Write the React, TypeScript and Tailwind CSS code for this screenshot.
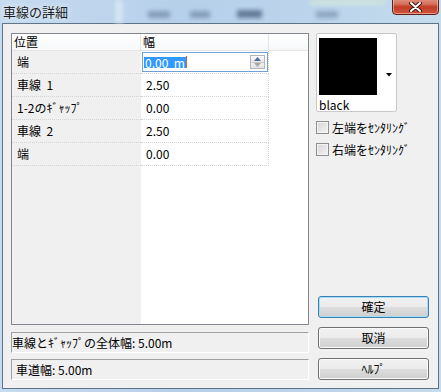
import React from "react";

const rows: [string, string][] = [
  ["端", "0.00 m"],
  ["車線 1", "2.50"],
  ["1-2のｷﾞｬｯﾌﾟ", "0.00"],
  ["車線 2", "2.50"],
  ["端", "0.00"],
];

function Btn({ label, def }: { label: string; def?: boolean }) {
  return (
    <div
      className={
        "w-[111px] h-[22px] rounded-[3px] border flex items-center justify-center text-[12px] text-black bg-[linear-gradient(to_bottom,#f2f2f2_0%,#ebebeb_48%,#dddddd_52%,#cfcfcf_100%)] " +
        (def
          ? "border-[#3c7fb1] shadow-[inset_0_0_0_1px_#9ee0f9]"
          : "border-[#707070] shadow-[inset_0_0_0_1px_#fbfbfb]")
      }
    >
      {label}
    </div>
  );
}

function CheckRow({ label }: { label: string }) {
  return (
    <div className="flex items-center h-[13px]">
      <div className="w-[13px] h-[13px] border border-[#8e8f8f] bg-[linear-gradient(135deg,#d6d6d6,#f4f4f4)] shadow-[inset_0_0_0_1px_#f4f4f4]" />
      <span className="ml-[3px] text-[12px] leading-none text-black">{label}</span>
    </div>
  );
}

export default function App() {
  return (
    <div className="w-[441px] h-[392px] overflow-hidden flex flex-col bg-[linear-gradient(to_right,#c6dbf0_0%,#b7d0ea_40%,#bcd5ec_75%,#c4dcec_100%)] font-['Noto_Sans_CJK_JP','Liberation_Sans',sans-serif]">
      {/* Title bar */}
      <div className="relative h-[23px] shrink-0">
        <span className="absolute left-[115px] top-0 h-[23px] w-[8px] bg-[#d4e4f3] blur-[2px]" />
        <span className="absolute left-[148px] top-[11px] h-[7px] w-[22px] bg-[#7f97b2] blur-[2px] opacity-90" />
        <span className="absolute left-[190px] top-[11px] h-[7px] w-[20px] bg-[#7f97b2] blur-[2px] opacity-90" />
        <span className="absolute left-[237px] top-[10px] h-[8px] w-[25px] bg-[#5c7390] blur-[2px] opacity-90" />
        <span className="absolute left-[316px] top-[11px] h-[7px] w-[22px] bg-[#8aa2bd] blur-[2px] opacity-90" />
        <span className="absolute left-[310px] top-0 h-[5px] w-[75px] bg-[#cfe4dc] blur-[2px]" />
        <div className="relative pl-[3px] pt-[3px] text-[13px] leading-[17px] text-[#1b1b1b] [text-shadow:0_0_6px_#ffffff]">
          車線の詳細
        </div>
        <div className="absolute left-[392px] top-[-5px] w-[47px] h-[20px] rounded-b-[4px] border border-[#5e2419] bg-[linear-gradient(to_bottom,#e7a596_0%,#d6705c_45%,#c03d27_60%,#d2553c_100%)] shadow-[inset_0_0_0_1px_rgba(255,220,210,0.5)] flex items-center justify-center">
          <svg width="13" height="10" viewBox="0 0 13 10" className="mt-[4px]">
            <path d="M2 1 L11 9 M11 1 L2 9" stroke="#3b1a14" strokeWidth="4" strokeLinecap="round" />
            <path d="M2 1 L11 9 M11 1 L2 9" stroke="#ffffff" strokeWidth="2" strokeLinecap="round" />
          </svg>
        </div>
      </div>

      {/* Client area */}
      <div className="mx-[2px] h-[366px] shrink-0 border border-[#5f7387] bg-[#f0f0f0] flex pl-[8px] pt-[9px]">
        {/* Left column */}
        <div className="w-[298px] flex flex-col">
          <div className="h-[292px] border border-[#828790] bg-white flex flex-col">
            {/* header */}
            <div className="h-[17px] flex border-b border-[#e5e5e5] bg-[linear-gradient(to_bottom,#ffffff,#f7f8f9)] text-[12px] leading-none text-black">
              <div className="w-[129px] border-r border-[#e3e5e8] pl-[2px] flex items-center">位置</div>
              <div className="w-[128px] border-r border-[#e3e5e8] pl-[2px] flex items-center">幅</div>
              <div className="flex-1" />
            </div>
            {/* body */}
            <div className="flex-1 flex">
              <div className="w-[129px] bg-[#f0f0f0] flex flex-col">
                {rows.map(([a], i) => (
                  <div
                    key={i}
                    className="h-[23px] border-b border-dotted border-[#d4d4d4] pl-[5px] flex items-center text-[12px] leading-none text-black whitespace-pre"
                  >
                    {a.replace(" ", "  ")}
                  </div>
                ))}
              </div>
              <div className="w-[128px] flex flex-col">
                {rows.map(([, b], i) =>
                  i === 0 ? (
                    <div key={i} className="h-[23px] border-b border-r border-dotted border-[#d4d4d4] pl-[1px] pt-[1px]">
                      <div className="h-[20px] w-[126px] border border-[#6fa1d4] bg-white flex items-center pl-[1px] pr-[2px]">
                        <span className="bg-[#3399ff] text-white text-[12px] leading-[11px] h-[11px] px-[1px] whitespace-pre">
                          0.00  m
                        </span>
                        <span className="w-[1px] h-[12px] bg-[#c4682c]" />
                        <div className="ml-auto w-[15px] h-[14px] border border-[#b5b5b5] flex flex-col">
                          <div className="flex-1 border-b border-[#c8c8c8] bg-[linear-gradient(#fbfbfb,#e8e8e8)] flex items-center justify-center">
                            <svg width="7" height="4" viewBox="0 0 7 4">
                              <path d="M0 4 L3.5 0 L7 4 Z" fill="#4d6f9b" />
                            </svg>
                          </div>
                          <div className="flex-1 bg-[linear-gradient(#f2f2f2,#e2e2e2)] flex items-center justify-center">
                            <svg width="7" height="4" viewBox="0 0 7 4">
                              <path d="M0 0 L7 0 L3.5 4 Z" fill="#a8a8a8" />
                            </svg>
                          </div>
                        </div>
                      </div>
                    </div>
                  ) : (
                    <div
                      key={i}
                      className="h-[23px] border-b border-r border-dotted border-[#d4d4d4] pl-[5px] flex items-center text-[12px] leading-none text-black"
                    >
                      {b}
                    </div>
                  )
                )}
              </div>
              <div className="flex-1" />
            </div>
          </div>
          <div className="mt-[7px] h-[21px] border border-t-[#a0a0a0] border-l-[#a0a0a0] border-b-white border-r-white flex items-center text-[12px] leading-none text-black">
            車線とｷﾞｬｯﾌﾟの全体幅: 5.00m
          </div>
          <div className="mt-[6px] h-[21px] border border-t-[#a0a0a0] border-l-[#a0a0a0] border-b-white border-r-white flex items-center pl-[4px] text-[12px] leading-none text-black">
            車道幅: 5.00m
          </div>
        </div>

        {/* Right column */}
        <div className="ml-[7px] flex flex-col">
          <div className="w-[81px] h-[79px] rounded-[2px] border border-[#c9c9c9] bg-white relative flex flex-col pl-[2px] pt-[4px]">
            <div className="w-[58px] h-[58px] bg-black" />
            <div className="text-[12px] leading-none mt-[4px] text-black">black</div>
            <svg width="6" height="4" viewBox="0 0 6 4" className="absolute left-[69px] top-[39px]">
              <path d="M0 0 L6 0 L3 3.5 Z" fill="#000" />
            </svg>
          </div>
          <div className="mt-[9px] flex flex-col gap-[9px]">
            <CheckRow label="左端をｾﾝﾀﾘﾝｸﾞ" />
            <CheckRow label="右端をｾﾝﾀﾘﾝｸﾞ" />
          </div>
          <div className="mt-auto mb-[8px] ml-[2px] flex flex-col gap-[9px]">
            <Btn label="確定" def />
            <Btn label="取消" />
            <Btn label="ﾍﾙﾌﾟ" />
          </div>
        </div>
      </div>
    </div>
  );
}
